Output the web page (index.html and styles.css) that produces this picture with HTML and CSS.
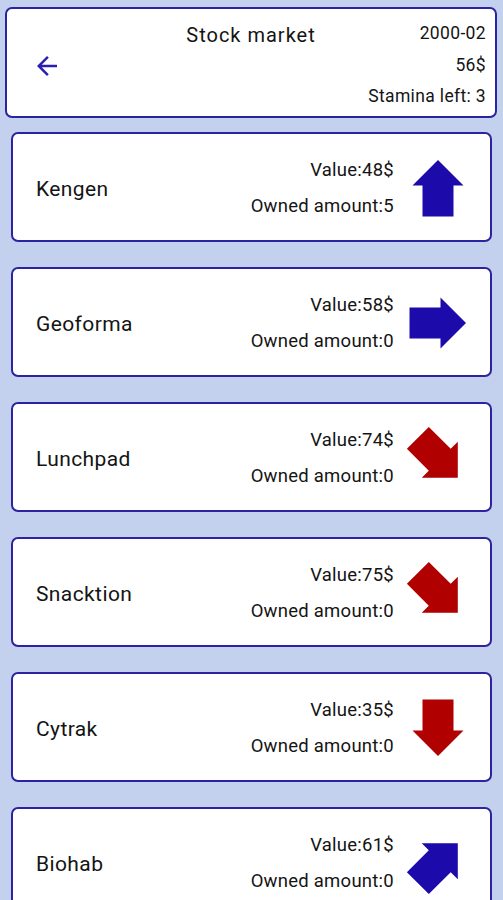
FILE: index.html
```html
<!DOCTYPE html>
<html lang="en">
<head>
<meta charset="utf-8">
<title>Stock market</title>
<link rel="stylesheet" href="styles.css">
</head>
<body>
<div class="screen">
  <header class="topbar">
    <div class="back">
      <svg class="back-icon" viewBox="0 0 24 24" width="30" height="30"><path d="M20 11H7.83l5.59-5.59L12 4l-8 8 8 8 1.41-1.41L7.83 13H20v-2z"/></svg>
    </div>
    <div class="title">Stock market</div>
    <div class="status">
      <div>2000-02</div>
      <div>56$</div>
      <div>Stamina left: 3</div>
    </div>
  </header>

  <main class="list">
    <div class="card">
      <div class="name">Kengen</div>
      <div class="info"><div>Value:48$</div><div>Owned amount:5</div></div>
      <svg class="arrow up rise" viewBox="0 0 60 60" width="60" height="60"><polygon points="30,2 55.5,27.5 45.5,27.5 45.5,58.5 14.5,58.5 14.5,27.5 4.5,27.5"/></svg>
    </div>
    <div class="card">
      <div class="name">Geoforma</div>
      <div class="info"><div>Value:58$</div><div>Owned amount:0</div></div>
      <svg class="arrow right rise" viewBox="0 0 60 60" width="60" height="60"><polygon points="30,2 55.5,27.5 45.5,27.5 45.5,58.5 14.5,58.5 14.5,27.5 4.5,27.5"/></svg>
    </div>
    <div class="card">
      <div class="name">Lunchpad</div>
      <div class="info"><div>Value:74$</div><div>Owned amount:0</div></div>
      <svg class="arrow down-right fall" viewBox="0 0 60 60" width="60" height="60"><polygon points="30,2 55.5,27.5 45.5,27.5 45.5,58.5 14.5,58.5 14.5,27.5 4.5,27.5"/></svg>
    </div>
    <div class="card">
      <div class="name">Snacktion</div>
      <div class="info"><div>Value:75$</div><div>Owned amount:0</div></div>
      <svg class="arrow down-right fall" viewBox="0 0 60 60" width="60" height="60"><polygon points="30,2 55.5,27.5 45.5,27.5 45.5,58.5 14.5,58.5 14.5,27.5 4.5,27.5"/></svg>
    </div>
    <div class="card">
      <div class="name">Cytrak</div>
      <div class="info"><div>Value:35$</div><div>Owned amount:0</div></div>
      <svg class="arrow down fall" viewBox="0 0 60 60" width="60" height="60"><polygon points="30,2 55.5,27.5 45.5,27.5 45.5,58.5 14.5,58.5 14.5,27.5 4.5,27.5"/></svg>
    </div>
    <div class="card">
      <div class="name">Biohab</div>
      <div class="info"><div>Value:61$</div><div>Owned amount:0</div></div>
      <svg class="arrow up-right rise" viewBox="0 0 60 60" width="60" height="60"><polygon points="30,2 55.5,27.5 45.5,27.5 45.5,58.5 14.5,58.5 14.5,27.5 4.5,27.5"/></svg>
    </div>
  </main>
</div>
</body>
</html>
```

FILE: styles.css
```css
html, body {
  margin: 0;
  padding: 0;
}

body {
  background: #c3d1ee;
  font-family: Roboto, "Noto Sans", "Liberation Sans", sans-serif;
  color: #141414;
  height: 100vh;
  overflow: hidden;
}

.screen {
  display: flex;
  flex-direction: column;
}

.topbar {
  margin: 7px 6px 0 5px;
  height: 111px;
  box-sizing: border-box;
  background: #ffffff;
  border: 2px solid #2b239f;
  border-radius: 7px;
  padding: 9px 9px 3px 9px;
  display: grid;
  grid-template-columns: 1fr auto 1fr;
  align-items: start;
}

.back {
  align-self: center;
  padding-left: 16px;
  height: 30px;
  margin-top: 1px;
}

.back-icon {
  display: block;
  fill: #2a1fb0;
}

.title {
  font-size: 20px;
  letter-spacing: 1px;
  line-height: 31.5px;
  margin-top: 2px;
  text-align: center;
  white-space: nowrap;
}

.status {
  justify-self: end;
  text-align: right;
  font-size: 17.5px;
  letter-spacing: 0.35px;
  line-height: 31.5px;
  white-space: nowrap;
}

.list {
  padding: 14px 11px 0 11px;
  display: flex;
  flex-direction: column;
  gap: 25px;
}

.card {
  flex: none;
  height: 110px;
  box-sizing: border-box;
  background: #ffffff;
  border: 2px solid #2b239f;
  border-radius: 7px;
  padding: 0 22px 0 23px;
  display: flex;
  align-items: center;
}

.name {
  flex: 1;
  font-size: 21px;
  letter-spacing: 0.4px;
  margin-top: 3px;
}

.info {
  text-align: right;
  font-size: 18.5px;
  letter-spacing: 0.25px;
  line-height: 36px;
  margin-right: 14px;
  margin-top: 2px;
}

.arrow {
  flex: none;
  display: block;
  margin-top: 1px;
}

.rise { fill: #1c0aaa; }
.fall { fill: #b00000; }

.up { transform: rotate(0deg); }
.right { transform: rotate(90deg); }
.down-right { transform: rotate(135deg); }
.down { transform: rotate(180deg); }
.up-right { transform: rotate(45deg); }
```
